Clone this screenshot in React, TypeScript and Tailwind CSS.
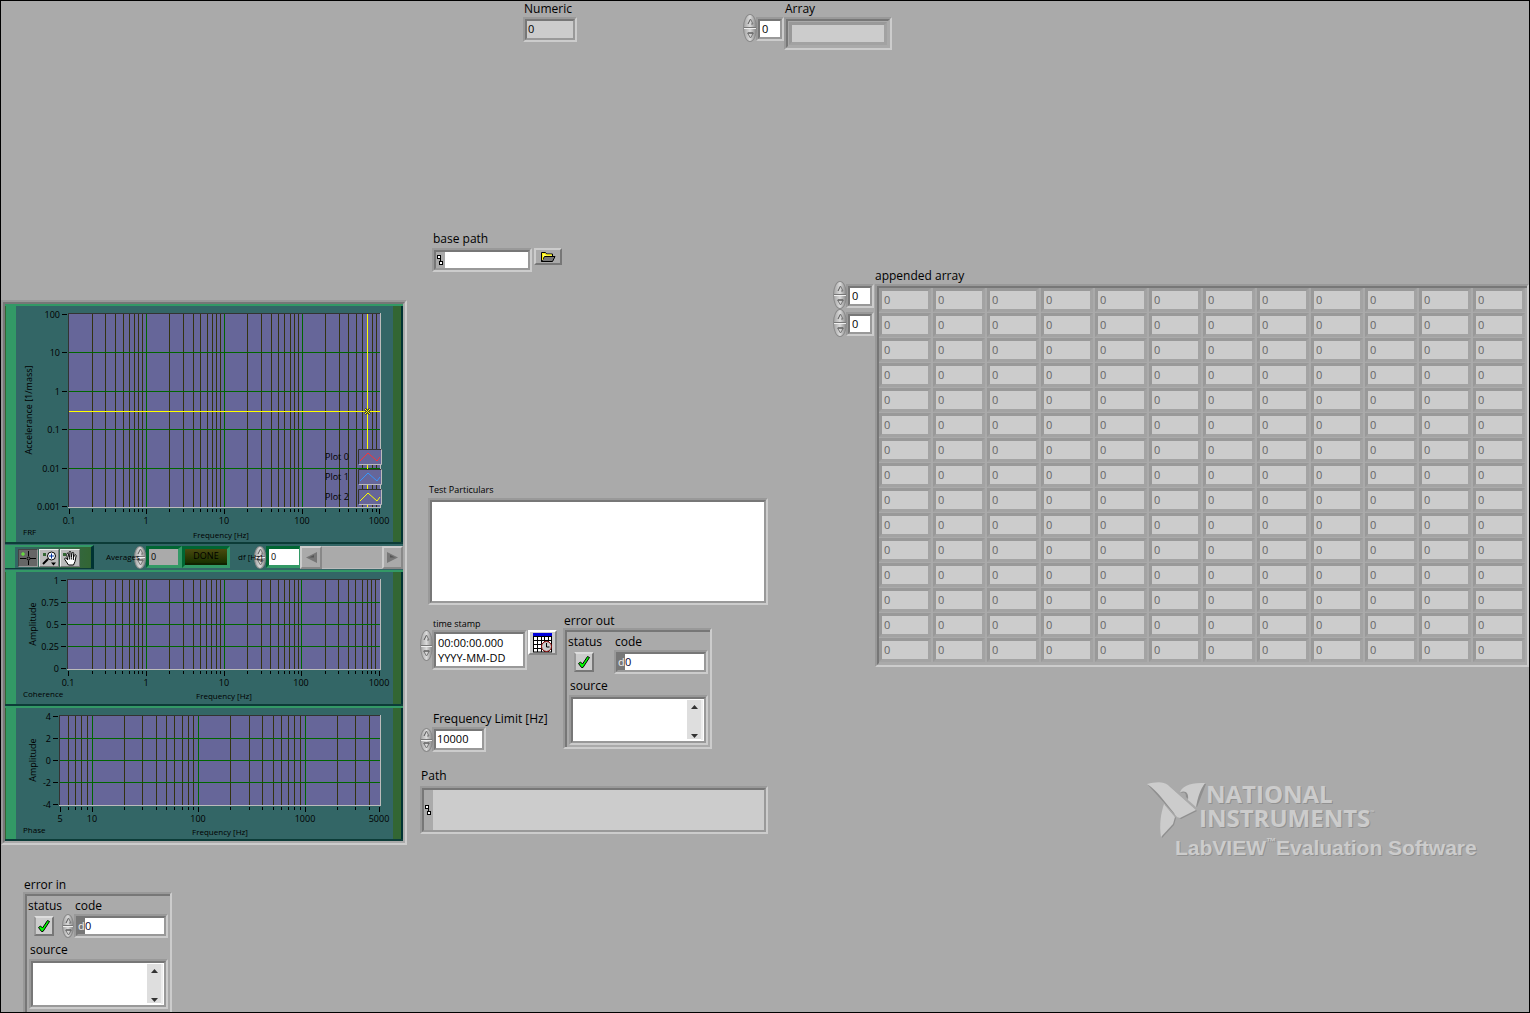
import { useId, type ReactNode } from "react";

const FONT = "font-['Open_Sans','Noto_Sans',sans-serif]";

/* ---------- basic controls ---------- */

function Frame({ children, className = "", inner = "" }: { children?: ReactNode; className?: string; inner?: string }) {
  return (
    <div className={`flex border-2 border-t-[#999] border-l-[#999] border-r-[#ccc] border-b-[#ccc] ${className}`}>
      <div className={`flex min-w-0 flex-1 border-2 border-t-[#777] border-l-[#777] border-r-[#999] border-b-[#999] ${inner}`}>
        {children}
      </div>
    </div>
  );
}

function Spinner({ name, className = "h-[26px] w-[13px]" }: { name: string; className?: string }) {
  return (
    <div
      className={`relative z-10 flex shrink-0 flex-col overflow-hidden rounded-[50%] border border-[#8a8a8a] bg-linear-to-r from-[#a8a8a8] via-[#dadada] to-[#8c8c8c] ${className}`}
    >
      <button type="button" aria-label={`Increase ${name}`} className="flex flex-1 items-center justify-center border-b border-[#777]">
        <svg width="7" height="7" viewBox="0 0 7 7" fill="none">
          <path d="M1 6 3.5 1" stroke="#555" />
          <path d="M3.5 1 6 6H4" stroke="#777" />
        </svg>
      </button>
      <button type="button" aria-label={`Decrease ${name}`} className="flex flex-1 items-center justify-center border-t border-[#f0f0f0]">
        <svg width="7" height="7" viewBox="0 0 7 7" fill="none">
          <path d="M0.5 1H6.5L3.5 6Z" stroke="#777" />
          <path d="M1 1H6" stroke="#555" />
        </svg>
      </button>
    </div>
  );
}

function PathGlyph() {
  return (
    <svg width="9" height="12" viewBox="0 0 9 12" fill="none" stroke="#000" className="shrink-0 self-center">
      <rect x="1.5" y="1.5" width="3" height="3" fill="#fff" />
      <rect x="3.5" y="7.5" width="3" height="3" fill="#fff" />
      <path d="M4.5 4V7.5" />
    </svg>
  );
}

function ScrollStub() {
  return (
    <div className="my-px mr-px flex w-4 flex-col justify-between border-r-2 border-[#eee] bg-[#dedede]">
      <button type="button" aria-label="Scroll up" className="flex h-3.5 items-center justify-center">
        <svg width="7" height="4" viewBox="0 0 7 4"><path d="M0 4 3.500 0 7 4Z" fill="#333" /></svg>
      </button>
      <button type="button" aria-label="Scroll down" className="flex h-2 items-center justify-center border-b border-white">
        <svg width="7" height="4" viewBox="0 0 7 4"><path d="M0 0 3.500 4 7 0Z" fill="#333" /></svg>
      </button>
    </div>
  );
}

/* ---------- charts ---------- */

type Tick = { at: number; text: string };

function logLines(start: number, decade: number, from: number, to: number) {
  const major: number[] = [];
  const minor: number[] = [];
  for (let e = Math.floor(Math.log10(from)); e <= Math.ceil(Math.log10(to)); e++) {
    for (let m = 1; m < 10; m++) {
      const v = m * Math.pow(10, e);
      if (v <= from * 1.01 || v >= to * 0.99) continue;
      const x = Math.floor(start + decade * Math.log10(v / from));
      (m === 1 ? major : minor).push(x);
    }
  }
  return { major, minor };
}

type ChartProps = {
  title: string;
  titleY: number;
  height: number;
  left: number;
  bottom: number;
  start: number;
  decade: number;
  from: number;
  to: number;
  xTicks: Tick[];
  yTicks: Tick[];
  yLabel: string;
  yLabelX: number;
  xLabelX: number;
  xLabelY: number;
  children?: ReactNode;
};

function Chart(p: ChartProps) {
  const right = 364;
  const top = 7;
  const { major, minor } = logLines(p.start, p.decade, p.from, p.to);
  return (
    <section className="flex border-t-2 border-b-2 border-t-[#339966] border-b-[#0c3c38] bg-[#336666]">
      <div className="w-[11px] border-l border-[#336633] bg-[#339966]" />
      <svg width="377" height={p.height} className="shrink-0" role="img" aria-label={p.title} fontSize="9" fill="#000">
        <rect x={p.left} y={top} width={right - p.left} height={p.bottom - top} fill="#666699" />
        <g shapeRendering="crispEdges">
          {minor.map((x) => (
            <g key={x}>
              <rect x={x} y={top} width="1" height={p.bottom - top} fill="#333311" />
              <rect x={x} y={p.bottom + 2} width="1" height="3" />
            </g>
          ))}
          {major.map((x) => (
            <rect key={x} x={x} y={top} width="1" height={p.bottom - top} fill="#006600" />
          ))}
          {p.yTicks.slice(1, -1).map((t) => (
            <rect key={t.at} x={p.left} y={t.at} width={right - p.left} height="1" fill="#006600" />
          ))}
          <path d={`M${p.left + 0.5} ${p.bottom}V${top + 0.5}H${right}`} fill="none" stroke="#333" />
          <path d={`M${p.left} ${p.bottom + 0.5}H${right + 0.5}V${top}`} fill="none" stroke="#bbb" />
          {p.yTicks.map((t) => (
            <rect key={t.at} x={p.left - 6} y={t.at} width="5" height="1" />
          ))}
          {p.xTicks.map((t) => (
            <rect key={t.at} x={t.at} y={p.bottom + 2} width="1" height="5" />
          ))}
        </g>
        {p.yTicks.map((t) => (
          <text key={t.at} x={p.left - 8} y={t.at + 4} textAnchor="end">{t.text}</text>
        ))}
        {p.xTicks.map((t) => (
          <text key={t.at} x={t.at} y={p.bottom + 17} textAnchor="middle">{t.text}</text>
        ))}
        <text x={p.xLabelX} y={p.xLabelY} textAnchor="middle" fontSize="8">Frequency [Hz]</text>
        <text x={7} y={p.titleY} fontSize="8">{p.title}</text>
        <text transform={`translate(${p.yLabelX} ${Math.round((top + p.bottom) / 2)}) rotate(-90)`} textAnchor="middle">
          {p.yLabel}
        </text>
        {p.children}
      </svg>
      <div className="flex-1 border-r-2 border-[#003333] bg-[#336633]" />
    </section>
  );
}

const PLOTS = [
  { name: "Plot 0", color: "#ff3333" },
  { name: "Plot 1", color: "#3399ff" },
  { name: "Plot 2", color: "#ffff00" },
];

function FrfOverlay() {
  return (
    <>
      <g shapeRendering="crispEdges" fill="#ffff00">
        <rect x="53" y="105" width="311" height="1" />
        <rect x="351" y="8" width="1" height="193" />
      </g>
      <path d="M349 103l5 5m0-5-5 5" stroke="#333" strokeWidth="2.5" />
      <path d="M349 103l5 5m0-5-5 5" stroke="#ffff00" />
      {PLOTS.map((plot, i) => (
        <g key={plot.name}>
          <text x="309" y={154 + i * 20}>{plot.name}</text>
          <rect x="342" y={143 + i * 20} width="24" height="16" fill="#666699" />
          <path d={`M342.5 ${158 + i * 20}v-14.500h23`} fill="none" stroke="#333" />
          <path d={`M343 ${158.5 + i * 20}h22.500v-15`} fill="none" stroke="#bbb" />
          <path d={`M344 ${155 + i * 20}l8-8 9 8 3-4`} fill="none" stroke={plot.color} />
        </g>
      ))}
    </>
  );
}

function GraphTool({ label, active, children }: { label: string; active?: boolean; children: ReactNode }) {
  return (
    <button
      type="button"
      aria-label={label}
      className={`flex h-[18px] w-5 items-center justify-center border ${
        active ? "border-t-[#444] border-l-[#444] border-r-[#999] border-b-[#999] bg-[#666]" : "border-t-[#eee] border-l-[#eee] border-r-[#777] border-b-[#777] bg-[#bbb]"
      }`}
    >
      <svg width="18" height="16" viewBox="0 0 18 16" fill="none" stroke="#000">
        {children}
      </svg>
    </button>
  );
}

function Toolbar() {
  return (
    <div className="flex h-[26px] items-center bg-[#336666] text-[8px]">
      <div className="flex h-6 w-[89px] shrink-0 items-center gap-px border-t-2 border-r-[3px] border-b border-t-[#339966] border-r-[#003333] border-b-[#0c3c38] bg-linear-to-r from-[#339966] from-12% via-[#336666] via-12% to-[#336633]">
        <div className="w-3" />
        <GraphTool label="Cursor movement" active>
          <path d="M1 8.500H7M11 8.500H17M9.500 1V6M9.500 10.500V15" />
          <circle cx="9.500" cy="8.500" r="1.500" />
          <path d="M4 2V6M2 4H6" stroke="#66ff33" />
        </GraphTool>
        <GraphTool label="Zoom">
          <path d="M3 3h3v3h-3z" fill="#336633" stroke="none" />
          <path d="M8 9 3 14" strokeWidth="2" />
          <circle cx="11.500" cy="6" r="4" fill="#fff" />
          <path d="M11.500 3.500v5M9 6h5" stroke="#003399" />
          <path d="M11 12.500h5l-2.500 3z" fill="#000" stroke="none" />
        </GraphTool>
        <GraphTool label="Pan">
          <path d="M2 3h3v3h-3z" fill="#336633" stroke="none" />
          <path
            d="M7.500 15 3.800 9.500C3.300 8 4.800 7.500 5.700 8.700L6.700 10 5.700 4.500C5.500 3 7 2.700 7.400 4.200L8.300 7.500 8.100 2.500C8.100 1 9.900 1 9.900 2.500L10.300 7.300 11 3.200C11.400 1.800 12.900 2.100 12.700 3.600L12.400 7.800 13.400 5.300C14 4.100 15.400 4.700 15.100 6L14 11.500 12.500 15Z"
            fill="#fff"
          />
          <path d="M8.300 7.500V9.500M10.300 7.500V9.500M12.400 8V10" />
        </GraphTool>
      </div>
      <label htmlFor="averages" className="relative z-20 ml-3 w-[28px] whitespace-nowrap">Averages</label>
      <Spinner name="averages" className="h-[23px] w-3" />
      <div className="flex h-[22px] w-9 border-t-[3px] border-l-[3px] border-r-4 border-b-[3px] border-t-[#006633] border-l-[#006633] border-r-[#339966] border-b-[#339966]">
        <input id="averages" readOnly defaultValue="0" className="w-full bg-[#aaa] pl-0.5 text-[9px]" />
      </div>
      <div className="flex h-[22px] w-12 border-[3px] border-t-[#006633] border-l-[#006633] border-r-[#339966] border-b-[#339966]">
        <button type="button" className="flex-1 border-b-2 border-[#112200] bg-linear-to-b from-[#4a4a10] to-[#183000] text-[9px] leading-3">DONE</button>
      </div>
      <label htmlFor="df" className="relative z-20 ml-2 w-4 whitespace-nowrap">df [Hz]</label>
      <Spinner name="df" className="h-[23px] w-3" />
      <div className="flex h-[22px] w-[34px] border-[3px] border-r-[1px] border-t-[#006633] border-l-[#006633] border-r-[#339966] border-b-[#339966]">
        <input id="df" defaultValue="0" className="w-full bg-white pl-0.5 text-[9px]" />
      </div>
      <div className="flex h-[23px] min-w-0 flex-1 bg-[#aaa]">
        <button type="button" aria-label="Scroll left" className="flex w-[22px] items-center justify-center border-2 border-t-[#ccc] border-l-[#ccc] border-r-[#888] border-b-[#888]">
          <svg width="11" height="11" viewBox="0 0 11 11"><path d="M11 0V11L0 5.500Z" fill="#777" /><path d="M8 3 3 5.500H8Z" fill="#555" /></svg>
        </button>
        <div className="flex-1 border-y border-[#bbb]" />
        <button type="button" aria-label="Scroll right" className="flex w-[21px] items-center justify-center border-2 border-t-[#ccc] border-l-[#ccc] border-r-[#888] border-b-[#888]">
          <svg width="11" height="11" viewBox="0 0 11 11"><path d="M0 0V11L11 5.500Z" fill="#777" /><path d="M3 3 8 5.500H3Z" fill="#555" /></svg>
        </button>
      </div>
    </div>
  );
}

/* ---------- error cluster ---------- */

function ErrorCluster({ name, control }: { name: string; control?: boolean }) {
  const id = useId();
  return (
    <fieldset className="w-[149px]">
      <legend className="float-left h-4 pt-px pl-px leading-4">{name}</legend>
      <div
        className={`clear-both flex flex-col border-2 border-t-[#999] border-l-[#999] border-r-[#ccc] ${
          control ? "h-[120px] border-b-0" : "h-[121px] border-b-[#ccc]"
        }`}
      >
        <div className="flex-1 border-t-2 border-l-2 border-[#777] pl-px">
          <div className="flex">
            <div className="flex w-[46px] flex-col">
              <span className="h-5 pt-0.5 leading-4">status</span>
              <div className="ml-1.5 flex h-5 w-5 items-center justify-center border-2 border-t-[#ddd] border-l-[#999] border-r-[#777] border-b-[#777] bg-[#ccc]">
                <svg width="14" height="14" viewBox="0 0 14 14" role="img" aria-label="no error">
                  <path d="M1.500 8.500 3.500 7 5.500 9 10.500 1.500 12.500 2.500 6 12.500H4.500Z" fill="#00ff00" stroke="#000" />
                </svg>
              </div>
            </div>
            <div className="flex flex-col">
              <label htmlFor={`${id}-code`} className="h-[18px] pt-0.5 pl-px leading-4">code</label>
              <div className="flex items-center">
                {control && <Spinner name="code" className="-ml-3 h-6 w-3" />}
                <Frame className="h-6 w-[94px]">
                  <span className="w-[7px] shrink-0 bg-[#777] text-[11px] leading-4 text-[#eee]">d</span>
                  <input id={`${id}-code`} defaultValue="0" readOnly={!control} className="min-w-0 flex-1 bg-white text-[11px] text-[#000033]" />
                </Frame>
              </div>
            </div>
          </div>
          <label htmlFor={`${id}-source`} className="mt-1 block h-[17px] pl-0.5 leading-4">source</label>
          <Frame className="ml-px h-[50px] w-[139px]" inner="bg-white">
            <textarea id={`${id}-source`} readOnly={!control} className="min-w-0 flex-1 resize-none bg-white" />
            <ScrollStub />
          </Frame>
        </div>
      </div>
    </fieldset>
  );
}

/* ---------- array ---------- */

function IndexField({ name }: { name: string }) {
  return (
    <div className="flex items-center">
      <Spinner name={name} className="h-7 w-[14px]" />
      <Frame className="mt-0.5 -ml-px h-6 w-[28px]">
        <input aria-label={name} defaultValue="0" className="w-full bg-white pl-0.5 text-[11px]" />
      </Frame>
    </div>
  );
}

function AppendedArray() {
  return (
    <div className="flex items-start">
      <div className="w-[42px] shrink-0 pt-[14px]">
        <IndexField name="row index" />
        <IndexField name="column index" />
      </div>
      <div className="min-w-0 flex-1">
        <p className="h-[17px] pt-px leading-4">appended array</p>
        <div className="border-2 border-t-[#999] border-l-[#999] border-r-[#ccc] border-b-[#ccc]">
          <div className="border-t-2 border-b-2 border-l-2 border-t-[#777] border-l-[#777] border-b-[#aaa]">
            <table className="w-full table-fixed border-collapse" aria-label="appended array">
              <tbody>
                {Array.from({ length: 15 }, (_, r) => (
                  <tr key={r}>
                    {Array.from({ length: 12 }, (_, c) => (
                      <td key={c} className="pr-0.5 pb-px">
                        <div className="h-6 border-[3px] border-t-[#999] border-l-[#999] border-r-[#a3a3a3] border-b-[#a3a3a3] bg-[#ccc] pl-0.5 text-[11px] leading-[18px] text-[#666]">
                          0
                        </div>
                      </td>
                    ))}
                  </tr>
                ))}
              </tbody>
            </table>
          </div>
        </div>
      </div>
    </div>
  );
}

/* ---------- watermark ---------- */

function Watermark() {
  return (
    <div className="w-[332px] font-bold text-[#ccc] [text-shadow:1px_1px_0_#919191]">
      <div className="flex h-[54px]">
        <svg width="59" height="57" viewBox="0 0 59 57" className="shrink-0 overflow-visible">
          <g fill="#8f8f8f" transform="translate(1 1)">
            <path d="M0 2C8 0 16-1 21 3L49 28 33 36 28 33Z" />
            <path d="M33 10C37 2 46 1 58 1L49 24 38 14C38 9 36 9 33 10Z" />
            <path d="M17 22 28 35 26 42 14 55C12 42 14 31 17 22Z" />
          </g>
          <path d="M0 2C8 0 16-1 21 3L49 28 33 36C30 36 28 33 27 31L14 15C10 10 6 6 0 2Z" fill="#ccc" />
          <path d="M33 10C37 2 46 1 58 1C53 8 51 15 49 25L41 18C42 11 39 8 33 10Z" fill="#ccc" />
          <path d="M17 22 28 35 26 42 14 55C12 42 14 31 17 22Z" fill="#ccc" />
        </svg>
        <div className="-ml-[7px] text-2xl leading-6">
          <div className="pl-[7px]">NATIONAL</div>
          <div className="flex items-start">
            INSTRUMENTS<span className="text-[5px] leading-3">™</span>
          </div>
        </div>
      </div>
      <div className="flex h-7 items-start pl-7 font-['Liberation_Sans_Narrow','Liberation_Sans',sans-serif] text-[21px] leading-6 whitespace-nowrap">
        LabVIEW<span className="text-[10px] leading-3">™</span>
        <span>Evaluation Software</span>
      </div>
    </div>
  );
}

/* ---------- page ---------- */

export default function App() {
  return (
    <div className={`flex min-h-screen flex-col border border-black bg-[#aaa] text-xs text-black ${FONT}`}>
      <header className="flex h-[49px] items-start pl-[522px]">
        <div className="w-[54px]">
          <label htmlFor="numeric" className="block h-4 pl-px leading-4">Numeric</label>
          <Frame className="h-[25px]">
            <input id="numeric" readOnly defaultValue="0" className="w-full bg-[#ccc] pl-px text-[11px]" />
          </Frame>
        </div>
        <div className="ml-[166px] flex">
          <div className="mt-[13px]">
            <IndexField name="array index" />
          </div>
          <div className="w-[108px]">
            <p className="h-4 pl-px leading-4">Array</p>
            <Frame className="h-[33px]" inner="border-r-[#aaa] border-b-[#aaa]">
              <div className="m-px flex-1 border-[3px] border-[#999] border-r-[#a2a2a2] border-b-[#a2a2a2] bg-[#ccc]" />
            </Frame>
          </div>
        </div>
      </header>

      <main className="flex flex-1 items-start">
        <div className="w-[406px] shrink-0 pt-[250px]">
          <Frame inner="flex-col border-r-[#aaa] border-b-[#aaa]">
            <Chart
              title="FRF" titleY={229} height={236} left={52} bottom={201} start={52.7} decade={77.8} from={0.1} to={1000}
              xTicks={[{ at: 53, text: "0.1" }, { at: 130, text: "1" }, { at: 208, text: "10" }, { at: 286, text: "100" }, { at: 363, text: "1000" }]}
              yTicks={[{ at: 8, text: "100" }, { at: 46, text: "10" }, { at: 85, text: "1" }, { at: 123, text: "0.1" }, { at: 162, text: "0.01" }, { at: 200, text: "0.001" }]}
              yLabel="Accelerance [1/mass]" yLabelX={16} xLabelX={205} xLabelY={232}
            >
              <FrfOverlay />
            </Chart>
            <Toolbar />
            <Chart
              title="Coherence" titleY={125} height={132} left={51} bottom={97} start={52.7} decade={77.66} from={0.1} to={1000}
              xTicks={[{ at: 52, text: "0.1" }, { at: 130, text: "1" }, { at: 208, text: "10" }, { at: 285, text: "100" }, { at: 363, text: "1000" }]}
              yTicks={[{ at: 8, text: "1" }, { at: 30, text: "0.75" }, { at: 52, text: "0.5" }, { at: 74, text: "0.25" }, { at: 96, text: "0" }]}
              yLabel="Amplitude" yLabelX={20} xLabelX={208} xLabelY={127}
            />
            <Chart
              title="Phase" titleY={125} height={131} left={43} bottom={97} start={44} decade={106.5} from={5} to={5000}
              xTicks={[{ at: 44, text: "5" }, { at: 76, text: "10" }, { at: 182, text: "100" }, { at: 289, text: "1000" }, { at: 363, text: "5000" }]}
              yTicks={[{ at: 8, text: "4" }, { at: 30, text: "2" }, { at: 52, text: "0" }, { at: 74, text: "-2" }, { at: 96, text: "-4" }]}
              yLabel="Amplitude" yLabelX={20} xLabelX={204} xLabelY={127}
            />
          </Frame>
          <div className="mt-[31px] ml-[22px]">
            <ErrorCluster name="error in" control />
          </div>
        </div>

        <div className="ml-[13px] w-[348px] shrink-0 pt-[181px]">
          <div className="pl-3">
            <label htmlFor="base-path" className="block h-[17px] pl-px leading-4">base path</label>
            <div className="flex items-start gap-0.5">
              <Frame className="h-6 w-[100px]">
                <PathGlyph />
                <input id="base-path" className="min-w-0 flex-1 bg-white" />
              </Frame>
              <button
                type="button"
                aria-label="Browse"
                className="flex h-[17px] w-[28px] items-center justify-center border-2 border-t-[#ccc] border-l-[#ccc] border-r-[#777] border-b-[#777] bg-[#aaa]"
              >
                <svg width="16" height="12" viewBox="0 0 16 12" stroke="#000">
                  <path d="M1.500 10.500V1.500H5.500L6.500 3H12.500V5.500" fill="#ffff66" />
                  <path d="M1.500 10.500 4.500 5.500H15L12.500 10.500Z" fill="#777" />
                  <path d="M2.500 9V2.500H5L6 4H11.500" fill="none" stroke="#ffee00" />
                </svg>
              </button>
            </div>
          </div>

          <label htmlFor="particulars" className="mt-[210px] block h-4 pl-[9px] text-[9px] leading-4">Test Particulars</label>
          <Frame className="ml-2 h-[107px]">
            <textarea id="particulars" className="w-full resize-none bg-white" />
          </Frame>

          <div className="mt-[7px] flex">
            <div className="w-[143px] shrink-0 pt-1">
              <label htmlFor="time-stamp" className="block h-[14px] pl-[13px] text-[9px] leading-4">time stamp</label>
              <div className="flex items-start">
                <Spinner name="time stamp" className="-mr-px h-[31px] w-[13px]" />
                <Frame className="h-10 w-[95px]">
                  <textarea
                    id="time-stamp"
                    defaultValue={"00:00:00.000\nYYYY-MM-DD"}
                    className="w-full resize-none overflow-hidden bg-white pt-px pl-0.5 text-[11px] leading-[15px] whitespace-pre"
                  />
                </Frame>
                <button
                  type="button"
                  aria-label="Set time"
                  className="ml-px flex h-[25px] w-[29px] items-center justify-center border-2 border-t-white border-l-white border-r-[#888] border-b-[#888] bg-[#ccc]"
                >
                  <svg width="22" height="20" viewBox="0 0 22 20" fill="none">
                    <rect x="1.500" y="1" width="18" height="18" fill="#fff" stroke="#000" />
                    <path d="M1 0H20V3H1Z" fill="#0000dd" />
                    <path d="M1 3.500H20M1 7.500H20M1 11.500H20M1 15.500H20M5.500 3V19M9.500 3V19M12.500 3V19M16.500 3V19" stroke="#000" />
                    <circle cx="14.500" cy="13.500" r="5" fill="#ccc" stroke="#880000" />
                    <path d="M14.500 10V14H17.500" stroke="#000" />
                  </svg>
                </button>
              </div>
              <label htmlFor="limit" className="mt-[41px] block h-4 pl-[13px] leading-4 whitespace-nowrap">Frequency Limit [Hz]</label>
              <div className="flex items-center">
                <Spinner name="frequency limit" className="-mr-px h-6 w-[13px]" />
                <Frame className="h-[25px] w-[54px]">
                  <input id="limit" defaultValue="10000" className="w-full bg-white pl-px text-[11px]" />
                </Frame>
              </div>
            </div>
            <ErrorCluster name="error out" />
          </div>

          <label htmlFor="path" className="mt-4 block h-[18px] pl-px leading-4">Path</label>
          <Frame className="h-12">
            <PathGlyph />
            <input id="path" readOnly className="min-w-0 flex-1 bg-[#ccc]" />
          </Frame>
        </div>

        <div className="ml-[65px] flex min-w-0 flex-1 flex-col pt-[217px]">
          <AppendedArray />
          <div className="mt-[115px] mr-[50px] self-end">
            <Watermark />
          </div>
        </div>
      </main>
    </div>
  );
}
